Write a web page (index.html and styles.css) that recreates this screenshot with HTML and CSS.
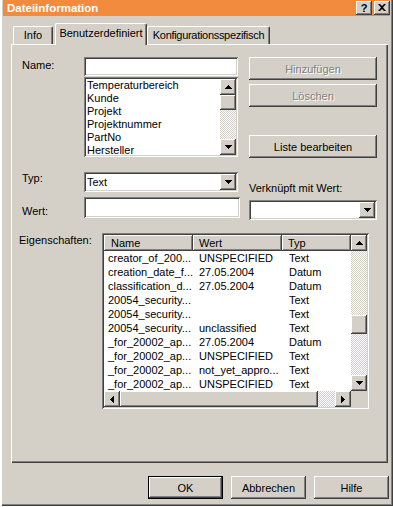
FILE: index.html
```html
<!DOCTYPE html>
<html>
<head>
<meta charset="UTF-8">
<title>Dateiinformation</title>
<link rel="stylesheet" href="styles.css">
</head>
<body>
	<div class="window">
		<div class="titlebar">
			<span class="title">Dateiinformation</span>
			<span class="tbtns">
				<span class="tbtn help">?</span>
				<span class="tbtn"><svg width="8" height="7" viewBox="0 0 8 7"><path d="M0 0h2l2 2 2-2h2L5 3.5 8 7H6L4 5 2 7H0l3-3.5z"/></svg></span>
			</span>
		</div>

		<div class="tabs">
			<span class="tab info">Info</span>
			<span class="tab active">Benutzerdefiniert</span>
			<span class="tab konf">Konfigurationsspezifisch</span>
		</div>

		<div class="panel">
			<div class="rowTop">
				<div class="lbl lblName">Name:</div>
				<div class="fieldCol">
					<div class="field nameInput"></div>
					<div class="field listbox">
						<div class="items">
							<div>Temperaturbereich</div>
							<div>Kunde</div>
							<div>Projekt</div>
							<div>Projektnummer</div>
							<div>PartNo</div>
							<div>Hersteller</div>
						</div>
						<div class="vscroll">
							<span class="arrowBtn"><svg width="7" height="4"><path d="M3 0h1v1h1v1h1v1h1v1H0V3h1V2h1V1h1z"/></svg></span>
							<span class="thumb thumbList"></span>
							<span class="track"></span>
							<span class="arrowBtn"><svg width="7" height="4"><path d="M0 0h7v1H6v1H5v1H4v1H3V3H2V2H1V1H0z"/></svg></span>
						</div>
					</div>
				</div>
				<div class="btnCol">
					<button class="btn disabled">Hinzufügen</button>
					<button class="btn disabled second">Löschen</button>
					<button class="btn third">Liste bearbeiten</button>
				</div>
			</div>

			<div class="rowTyp">
				<div class="lblCol">
					<div class="lbl">Typ:</div>
					<div class="lbl lblWert">Wert:</div>
				</div>
				<div class="fieldCol">
					<div class="field select typSelect">
						<span class="selText">Text</span>
						<span class="arrowBtn"><svg width="7" height="4"><path d="M0 0h7v1H6v1H5v1H4v1H3V3H2V2H1V1H0z"/></svg></span>
					</div>
					<div class="field wertInput"></div>
				</div>
				<div class="rightCol">
					<div class="lbl lblVerk">Verknüpft mit Wert:</div>
					<div class="field select verkSelect">
						<span class="selText"></span>
						<span class="arrowBtn"><svg width="7" height="4"><path d="M0 0h7v1H6v1H5v1H4v1H3V3H2V2H1V1H0z"/></svg></span>
					</div>
				</div>
			</div>

			<div class="rowEig">
				<div class="lbl lblEig">Eigenschaften:</div>
				<div class="field listview">
					<div class="lvMain">
						<div class="lvHead">
							<span class="hcell hName">Name</span>
							<span class="hcell">Wert</span>
							<span class="hcell">Typ</span>
						</div>
						<div class="lvRow"><span class="cName">creator_of_200...</span><span>UNSPECIFIED</span><span class="cTyp">Text</span></div>
						<div class="lvRow"><span class="cName">creation_date_f...</span><span>27.05.2004</span><span class="cTyp">Datum</span></div>
						<div class="lvRow"><span class="cName">classification_d...</span><span>27.05.2004</span><span class="cTyp">Datum</span></div>
						<div class="lvRow"><span class="cName">20054_security...</span><span></span><span class="cTyp">Text</span></div>
						<div class="lvRow"><span class="cName">20054_security...</span><span></span><span class="cTyp">Text</span></div>
						<div class="lvRow"><span class="cName">20054_security...</span><span>unclassified</span><span class="cTyp">Text</span></div>
						<div class="lvRow"><span class="cName">_for_20002_ap...</span><span>27.05.2004</span><span class="cTyp">Datum</span></div>
						<div class="lvRow"><span class="cName">_for_20002_ap...</span><span>UNSPECIFIED</span><span class="cTyp">Text</span></div>
						<div class="lvRow"><span class="cName">_for_20002_ap...</span><span>not_yet_appro...</span><span class="cTyp">Text</span></div>
						<div class="lvRow"><span class="cName">_for_20002_ap...</span><span>UNSPECIFIED</span><span class="cTyp">Text</span></div>
					</div>
					<div class="vscroll lvV">
						<span class="arrowBtn"><svg width="7" height="4"><path d="M3 0h1v1h1v1h1v1h1v1H0V3h1V2h1V1h1z"/></svg></span>
						<span class="track trackTop"></span>
						<span class="thumb thumbLv"></span>
						<span class="track"></span>
						<span class="arrowBtn"><svg width="7" height="4"><path d="M0 0h7v1H6v1H5v1H4v1H3V3H2V2H1V1H0z"/></svg></span>
					</div>
					<div class="hscroll">
						<span class="arrowBtn"><svg width="4" height="7"><path d="M3 0h1v7H3V6H2V5H1V4H0V3h1V2h1V1h1z"/></svg></span>
						<span class="thumb thumbH"></span>
						<span class="track"></span>
						<span class="arrowBtn"><svg width="4" height="7"><path d="M0 0h1v1h1v1h1v1h1v1H3v1H2v1H1v1H0z"/></svg></span>
					</div>
					<div class="sizebox"></div>
				</div>
			</div>
		</div>

		<div class="footer">
			<button class="btn btnFoot default">OK</button>
			<button class="btn btnFoot">Abbrechen</button>
			<button class="btn btnFoot">Hilfe</button>
		</div>
	</div>
</body>
</html>
```

FILE: styles.css
```css
body {
	margin: 0;
	background: #fff;
	font-family: "Liberation Sans", Arial, sans-serif;
	font-size: 11px;
	color: #000;
}

.window {
	width: 393px;
	height: 506px;
	box-sizing: border-box;
	padding: 0 3px 3px 3px;
	background: #d4d0c8;
	box-shadow: inset 2px 0 0 #fff, inset -1px -1px 0 #404040, inset -2px -2px 0 #808080;
}

/* title bar */
.titlebar {
	height: 16px;
	background: #f28b3d;
	display: flex;
	align-items: center;
	justify-content: space-between;
	padding-left: 4px;
}

.title {
	color: #fff;
	font-weight: bold;
	font-size: 11.5px;
}

.tbtns {
	display: flex;
	gap: 2px;
}

.tbtn {
	width: 16px;
	height: 14px;
	box-sizing: border-box;
	background: #d4d0c8;
	box-shadow: inset -1px -1px 0 #404040, inset 1px 1px 0 #fff, inset -2px -2px 0 #808080;
	display: flex;
	align-items: center;
	justify-content: center;
	font-weight: bold;
	font-size: 11px;
	line-height: 14px;
}

.tbtn svg {
	margin-top: -1px;
}

/* tabs */
.tabs {
	display: flex;
	align-items: flex-end;
	height: 21px;
	margin: 7px 0 0 8px;
}

.tab {
	height: 18px;
	box-sizing: border-box;
	border: 1px solid;
	border-color: #fff #404040 transparent #fff;
	border-bottom: none;
	border-radius: 2px 2px 0 0;
	box-shadow: inset -1px 0 0 #808080;
	text-align: center;
	line-height: 17px;
	background: #d4d0c8;
	white-space: nowrap;
}

.tab.info {
	width: 40px;
	margin-left: 2px;
}

.tab.active {
	width: 92px;
	height: 22px;
	margin-left: 2px;
	margin-bottom: -1px;
	line-height: 19px;
	position: relative;
	z-index: 1;
}

.tab.konf {
	width: 123px;
	letter-spacing: -0.3px;
}

/* panel */
.panel {
	width: 377px;
	height: 419px;
	margin-left: 8px;
	box-sizing: border-box;
	padding: 13px 0 0 11px;
	box-shadow: inset 1px 1px 0 #fff, inset -1px -1px 0 #404040, inset -2px -2px 0 #808080;
}

.lbl {
	line-height: 13px;
	white-space: nowrap;
}

.field {
	background: #fff;
	box-sizing: border-box;
	box-shadow: inset 1px 1px 0 #808080, inset -1px -1px 0 #fff, inset 2px 2px 0 #404040, inset -2px -2px 0 #d4d0c8;
}

.rowTop {
	display: flex;
	height: 101px;
}

.lblName {
	width: 62px;
	padding-top: 2px;
}

.fieldCol {
	width: 154px;
	display: flex;
	flex-direction: column;
}

.nameInput {
	height: 19px;
}

.listbox {
	height: 80px;
	margin-top: 1px;
	padding: 2px;
	display: flex;
}

.items {
	flex: 1;
	padding-left: 1px;
	line-height: 13px;
	overflow: hidden;
}

.vscroll {
	width: 16px;
	display: flex;
	flex-direction: column;
}

.track {
	flex: 1;
	background: repeating-conic-gradient(#fff 0 25%, #d4d0c8 0 50%) 0 0 / 2px 2px;
}

.thumb {
	background: #d4d0c8;
	box-shadow: inset -1px -1px 0 #404040, inset 1px 1px 0 #fff, inset -2px -2px 0 #808080;
}

.thumbList {
	height: 15px;
}

.arrowBtn {
	width: 16px;
	height: 16px;
	flex: none;
	box-sizing: border-box;
	background: #d4d0c8;
	box-shadow: inset -1px -1px 0 #404040, inset 1px 1px 0 #fff, inset -2px -2px 0 #808080;
	display: flex;
	align-items: center;
	justify-content: center;
}

.arrowBtn svg {
	display: block;
}

.btnCol {
	width: 128px;
	margin-left: 11px;
	display: flex;
	flex-direction: column;
}

.btn {
	height: 23px;
	border: none;
	padding: 0;
	background: #d4d0c8;
	font-family: "Liberation Sans", Arial, sans-serif;
	font-size: 11px;
	color: #000;
	box-shadow: inset -1px -1px 0 #404040, inset 1px 1px 0 #fff, inset -2px -2px 0 #808080;
}

.btn.disabled {
	color: #808080;
	text-shadow: 1px 1px 0 #fff;
}

.btn.second {
	margin-top: 4px;
}

.btn.third {
	margin-top: 28px;
}

/* Typ / Wert */
.rowTyp {
	display: flex;
	margin-top: 14px;
}

.lblCol {
	width: 62px;
}

.lblWert {
	margin-top: 20px;
}

.select {
	display: flex;
	align-items: center;
	padding: 2px;
}

.selText {
	flex: 1;
	padding-left: 1px;
}

.typSelect {
	height: 20px;
}

.wertInput {
	height: 21px;
	margin-top: 5px;
	width: 156px;
}

.rightCol {
	width: 128px;
	margin-left: 11px;
}

.lblVerk {
	padding-top: 10px;
}

.verkSelect {
	height: 20px;
	margin-top: 5px;
}

/* Eigenschaften */
.rowEig {
	display: flex;
	margin-top: 13px;
	margin-left: -3px;
}

.lblEig {
	width: 83px;
	padding-top: 1px;
}

.listview {
	width: 267px;
	height: 176px;
	padding: 2px;
	display: grid;
	grid-template-columns: 247px 16px;
	grid-template-rows: 156px 16px;
}

.lvMain {
	overflow: hidden;
}

.lvHead {
	display: grid;
	grid-template-columns: 89px 89px 69px;
	height: 16px;
}

.hcell {
	background: #d4d0c8;
	box-sizing: border-box;
	padding-left: 6px;
	line-height: 16px;
	box-shadow: inset -1px -1px 0 #404040, inset 1px 1px 0 #fff, inset -2px -2px 0 #808080;
}

.hcell.hName {
	padding-left: 7px;
}

.lvRow {
	display: grid;
	grid-template-columns: 89px 89px 69px;
	height: 14px;
	line-height: 14px;
	white-space: nowrap;
}

.lvRow span {
	padding-left: 6px;
	overflow: hidden;
}

.lvRow .cName {
	padding-left: 4px;
}

.lvRow .cTyp {
	padding-left: 7px;
}

.trackTop {
	flex: none;
	height: 64px;
}

.thumbLv {
	height: 19px;
}

.hscroll {
	display: flex;
}

.thumbH {
	width: 198px;
}

.sizebox {
	background: #d4d0c8;
}

/* bottom buttons */
.footer {
	display: flex;
	justify-content: flex-end;
	gap: 8px;
	margin-top: 13px;
	padding-right: 1px;
}

.btnFoot {
	width: 75px;
}

.btn.default {
	border: 1px solid #000;
}
```
